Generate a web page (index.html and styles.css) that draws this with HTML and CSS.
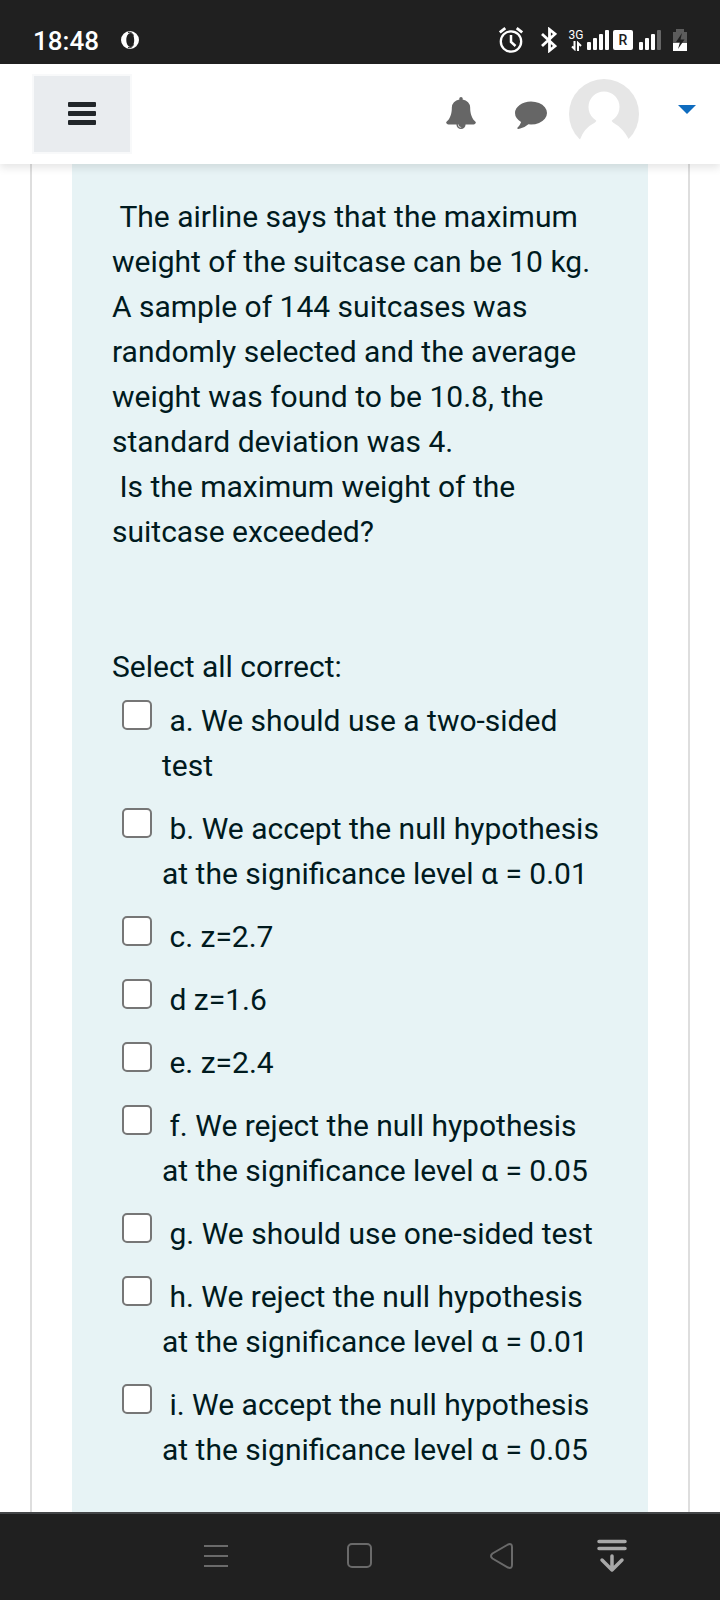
FILE: index.html
```html
<!DOCTYPE html>
<html lang="en">
<head>
    <meta charset="UTF-8">
    <meta name="viewport" content="width=device-width, initial-scale=1.0">
    <title>Quiz</title>
    <link rel="stylesheet" href="styles.css">
</head>
<body>
    <!-- Phone status bar -->
    <div class="status-bar">
        <div class="status-left">
            <span class="clock">18:48</span>
            <svg width="18" height="18" viewBox="0 0 18 18" fill="#fff" fill-rule="evenodd">
                <path d="M9 0a9 9 0 1 0 0 18A9 9 0 1 0 9 0zM9.500 2c2.200 0 3.700 3 3.700 7s-1.500 7-3.700 7S5.300 13 5.300 9s2-7 4.200-7z"/>
                <path d="M7 1.500c3-1 4.500 1 5.500 3M7 16.500c3 1 4.500-1 5.500-3" fill="none" stroke="#202020" stroke-width="1"/>
            </svg>
        </div>
        <div class="status-right">
            <div class="system-icons">
                <svg width="24" height="26" viewBox="0 0 24 26" fill="none" stroke="#fff">
                    <circle cx="12" cy="14.500" r="10.200" stroke-width="2.300"/>
                    <path d="M12 8v7l4.500 4" stroke-width="2.500"/>
                    <path d="M.8 5.500l5.500-4.300M23.200 5.500l-5.500-4.300" stroke-width="2.800"/>
                </svg>
                <svg width="16" height="26" viewBox="0 0 16 26" fill="none" stroke="#fff" stroke-width="2.800">
                    <path d="M1 7l13 12-5.500 4.500v-21L14 7 1 19"/>
                </svg>
            </div>
            <div class="signals">
                <div class="network">
                    <span>3G</span>
                    <svg width="12" height="10" viewBox="0 0 12 10" fill="none" stroke="#fff" stroke-width="2">
                        <path d="M4.500 0v8L2 5.500M8 10V2l3 3"/>
                    </svg>
                </div>
                <svg width="22" height="20" viewBox="0 0 22 20" fill="#fff">
                    <rect x="0" y="12" width="4" height="8" rx="1"/>
                    <rect x="6" y="8" width="4" height="12" rx="1"/>
                    <rect x="12" y="4" width="4" height="16" rx="1"/>
                    <rect x="18" y="0" width="4" height="20" rx="1"/>
                </svg>
                <span class="roaming">R</span>
                <svg width="22" height="20" viewBox="0 0 22 20" fill="#fff">
                    <rect x="0" y="12" width="4" height="8" rx="1"/>
                    <rect x="6" y="8" width="4" height="12" rx="1"/>
                    <rect x="12" y="4" width="4" height="16" rx="1"/>
                    <rect x="18" y="0" width="4" height="20" rx="1" fill="#666"/>
                </svg>
            </div>
            <svg width="14" height="22" viewBox="0 0 14 22">
                <path d="M0 3h3V0h8v3h3v11H0z" fill="#5c5c5c"/>
                <path d="M0 14h14v8H0z" fill="#fff"/>
                <path d="M9 4L3 13h4l-2 7 6.500-9.500H7.500z" fill="#202020"/>
            </svg>
        </div>
    </div>

    <!-- Site header -->
    <header class="navbar">
        <button class="menu-btn" type="button" aria-label="Side panel">
            <svg width="28" height="24" viewBox="0 0 28 24" fill="#212529">
                <rect x="0" y="1" width="28" height="5" rx="1"/>
                <rect x="0" y="10" width="28" height="5" rx="1"/>
                <rect x="0" y="19" width="28" height="5" rx="1"/>
            </svg>
        </button>
        <div class="nav-right">
            <div class="nav-links">
                <a href="#" aria-label="Notifications">
                    <svg width="32" height="32" viewBox="0 0 1792 1792" fill="#666">
                        <path d="M912 1696q0-16-16-16-59 0-101.500-42.500t-42.500-101.500q0-16-16-16t-16 16q0 73 51.500 124.500t124.500 51.500q16 0 16-16zm816-288q0 52-38 90t-90 38h-448q0 106-75 181t-181 75-181-75-75-181h-448q-52 0-90-38t-38-90q50-42 91-88t85-119.500 74.500-158.500 50-206 19.500-260q0-152 117-282.500t307-158.500q-8-19-8-39 0-40 28-68t68-28 68 28 28 68q0 20-8 39 190 28 307 158.500t117 282.500q0 139 19.500 260t50 206 74.500 158.500 85 119.500 91 88z"/>
                    </svg>
                </a>
                <a href="#" aria-label="Messages">
                    <svg width="32" height="32" viewBox="0 0 1792 1792" fill="#666">
                        <path d="M1792 896q0 174-120 321.500t-326 233-450 85.500q-70 0-145-8-198 175-460 242-49 14-114 22-17 2-30.500-9t-17.500-29v-1q-3-4-.5-12t2-10 4.500-9.500l6-9 7-8.500 8-9q7-8 31-34.500t34.500-38 31-39.500 32.500-51 27-59 26-76q-157-89-247.500-220t-90.500-281q0-130 71-248.500t191-204.500 286-136.500 348-50.500q244 0 450 85.500t326 233 120 321.500z"/>
                    </svg>
                </a>
            </div>
            <button class="user-menu" type="button" aria-label="User menu">
                <svg width="70" height="70" viewBox="0 0 70 70">
                    <circle cx="35" cy="35" r="35" fill="#e6e6e6"/>
                    <circle cx="35" cy="28" r="15.500" fill="#fff"/>
                    <path d="M27 40q1 2-1 3.500Q15 49 11 60.500V70h49v-9.500Q54 49 44 43.500q-2-1.500-1-3.500z" fill="#fff"/>
                </svg>
                <span class="caret"></span>
            </button>
        </div>
    </header>

    <!-- Question -->
    <main class="card">
        <form class="question">
            <p class="question-text">
                &nbsp;The airline says that the maximum weight of the suitcase can be 10 kg. A sample of 144 suitcases was randomly selected and the average weight was found to be 10.8, the standard deviation was 4.<br>
                &nbsp;Is the maximum weight of the suitcase exceeded?
            </p>
            <fieldset class="answers">
                <legend>Select all correct:</legend>
                <div class="answer">
                    <input type="checkbox" id="a">
                    <label for="a">&nbsp;a. We should use a two-sided test</label>
                </div>
                <div class="answer">
                    <input type="checkbox" id="b">
                    <label for="b">&nbsp;b. We accept the null hypothesis at the significance level α = 0.01</label>
                </div>
                <div class="answer">
                    <input type="checkbox" id="c">
                    <label for="c">&nbsp;c. z=2.7</label>
                </div>
                <div class="answer">
                    <input type="checkbox" id="d">
                    <label for="d">&nbsp;d z=1.6</label>
                </div>
                <div class="answer">
                    <input type="checkbox" id="e">
                    <label for="e">&nbsp;e. z=2.4</label>
                </div>
                <div class="answer">
                    <input type="checkbox" id="f">
                    <label for="f">&nbsp;f. We reject the null hypothesis at the significance level α = 0.05</label>
                </div>
                <div class="answer">
                    <input type="checkbox" id="g">
                    <label for="g">&nbsp;g. We should use one-sided test</label>
                </div>
                <div class="answer">
                    <input type="checkbox" id="h">
                    <label for="h">&nbsp;h. We reject the null hypothesis at the significance level α = 0.01</label>
                </div>
                <div class="answer">
                    <input type="checkbox" id="i">
                    <label for="i">&nbsp;i. We accept the null hypothesis at the significance level α = 0.05</label>
                </div>
            </fieldset>
        </form>
    </main>

    <!-- Phone navigation bar -->
    <nav class="system-nav">
        <button type="button" aria-label="Recent apps">
            <svg width="24" height="22" viewBox="0 0 24 22" fill="#6a6a6a">
                <path d="M0 0h24v2H0zM0 10h24v2H0zM0 20h24v2H0z"/>
            </svg>
        </button>
        <button type="button" aria-label="Home">
            <svg width="26" height="26" viewBox="0 0 26 26" fill="none" stroke="#6a6a6a" stroke-width="2">
                <rect x="1" y="1" width="23" height="23" rx="4"/>
            </svg>
        </button>
        <button type="button" aria-label="Back">
            <svg width="28" height="26" viewBox="0 0 28 26" fill="none" stroke="#6a6a6a" stroke-width="2">
                <path d="M18 1.500L2.500 10.500q-3 2.500 0 5L18 24.500q4 1.500 4-2.500V4q0-4-4-2.500z"/>
            </svg>
        </button>
        <button type="button" aria-label="Hide navigation bar">
            <svg width="30" height="34" viewBox="0 0 30 34" fill="none" stroke="#a8a8a8" stroke-width="3.500" stroke-linecap="round" stroke-linejoin="round">
                <path d="M2 2.500h26M2 9.500h26M15 17v14M5 21l10 10 10-10"/>
            </svg>
        </button>
    </nav>
</body>
</html>
```
FILE: styles.css
```css
* {
    margin: 0;
    padding: 0;
    box-sizing: border-box;
}

body {
    display: flex;
    flex-direction: column;
    min-height: 100vh;
    background: #fff;
    color: #001a1e;
    font-family: Roboto, "Noto Sans", sans-serif;
    font-size: 30px;
    line-height: 45px;
}

button {
    border: none;
    background: none;
    cursor: pointer;
}

svg {
    display: block;
    flex-shrink: 0;
}

/* Phone status bar */
.status-bar {
    display: flex;
    align-items: center;
    justify-content: space-between;
    height: 64px;
    padding: 16px 33px 0;
    background: #202020;
    color: #fff;
}

.status-left {
    display: flex;
    align-items: center;
    gap: 22px;
}

.clock {
    padding-top: 2px;
    font-size: 26px;
    line-height: 32px;
    font-weight: 500;
}

.status-right {
    display: flex;
    align-items: center;
    gap: 12px;
}

.system-icons {
    display: flex;
    align-items: center;
    gap: 18px;
}

.signals {
    display: flex;
    align-items: center;
    gap: 4px;
}

.network {
    display: flex;
    flex-direction: column;
    align-items: center;
    width: 14px;
    font-size: 12px;
    line-height: 11px;
}

.roaming {
    width: 20px;
    margin-right: 2px;
    border-radius: 2px;
    background: #fff;
    color: #202020;
    font-size: 14px;
    line-height: 20px;
    font-weight: 500;
    text-align: center;
}

/* Site header */
.navbar {
    display: flex;
    align-items: center;
    justify-content: space-between;
    position: relative;
    z-index: 1;
    height: 100px;
    padding: 0 24px 0 32px;
    background: #fff;
    box-shadow: 0 4px 8px rgba(0, 0, 0, 0.1);
}

.menu-btn {
    display: flex;
    align-items: center;
    justify-content: center;
    width: 100px;
    height: 80px;
    padding-bottom: 2px;
    border: 2px solid #f8f9fa;
    background: #e9ecef;
}

.nav-right {
    display: flex;
    align-items: center;
    gap: 22px;
}

.nav-links {
    display: flex;
    gap: 38px;
    padding-bottom: 2px;
}

.user-menu {
    display: flex;
    align-items: center;
    gap: 39px;
}

.caret {
    margin-bottom: 10px;
    border-top: 9px solid #0f6cbf;
    border-left: 9px solid transparent;
    border-right: 9px solid transparent;
}

/* Question */
.card {
    display: flex;
    flex: 1;
    margin: 0 30px;
    padding: 0 40px;
    border-left: 2px solid #dedede;
    border-right: 2px solid #dedede;
}

.question {
    flex: 1;
    padding: 30px 40px;
    background: #e7f3f5;
}

.question-text {
    margin-bottom: 90px;
}

.answers {
    border: none;
}

.answer {
    display: flex;
    align-items: flex-start;
    gap: 10px;
    padding: 9px 0 9px 10px;
}

.answer input {
    appearance: none;
    flex-shrink: 0;
    width: 30px;
    height: 30px;
    margin-top: 2px;
    border: 2px solid #767676;
    border-radius: 5px;
    background: #fff;
}

.answer input:checked {
    border-color: #0f6cbf;
    background: #0f6cbf;
}

/* Phone navigation bar */
.system-nav {
    display: grid;
    grid-template-columns: 2fr 2fr 2fr 1fr;
    height: 88px;
    padding: 0 10% 2px 20%;
    border-top: 2px solid #444648;
    background: #202020;
}

.system-nav button {
    display: flex;
    align-items: center;
    justify-content: center;
}
```
